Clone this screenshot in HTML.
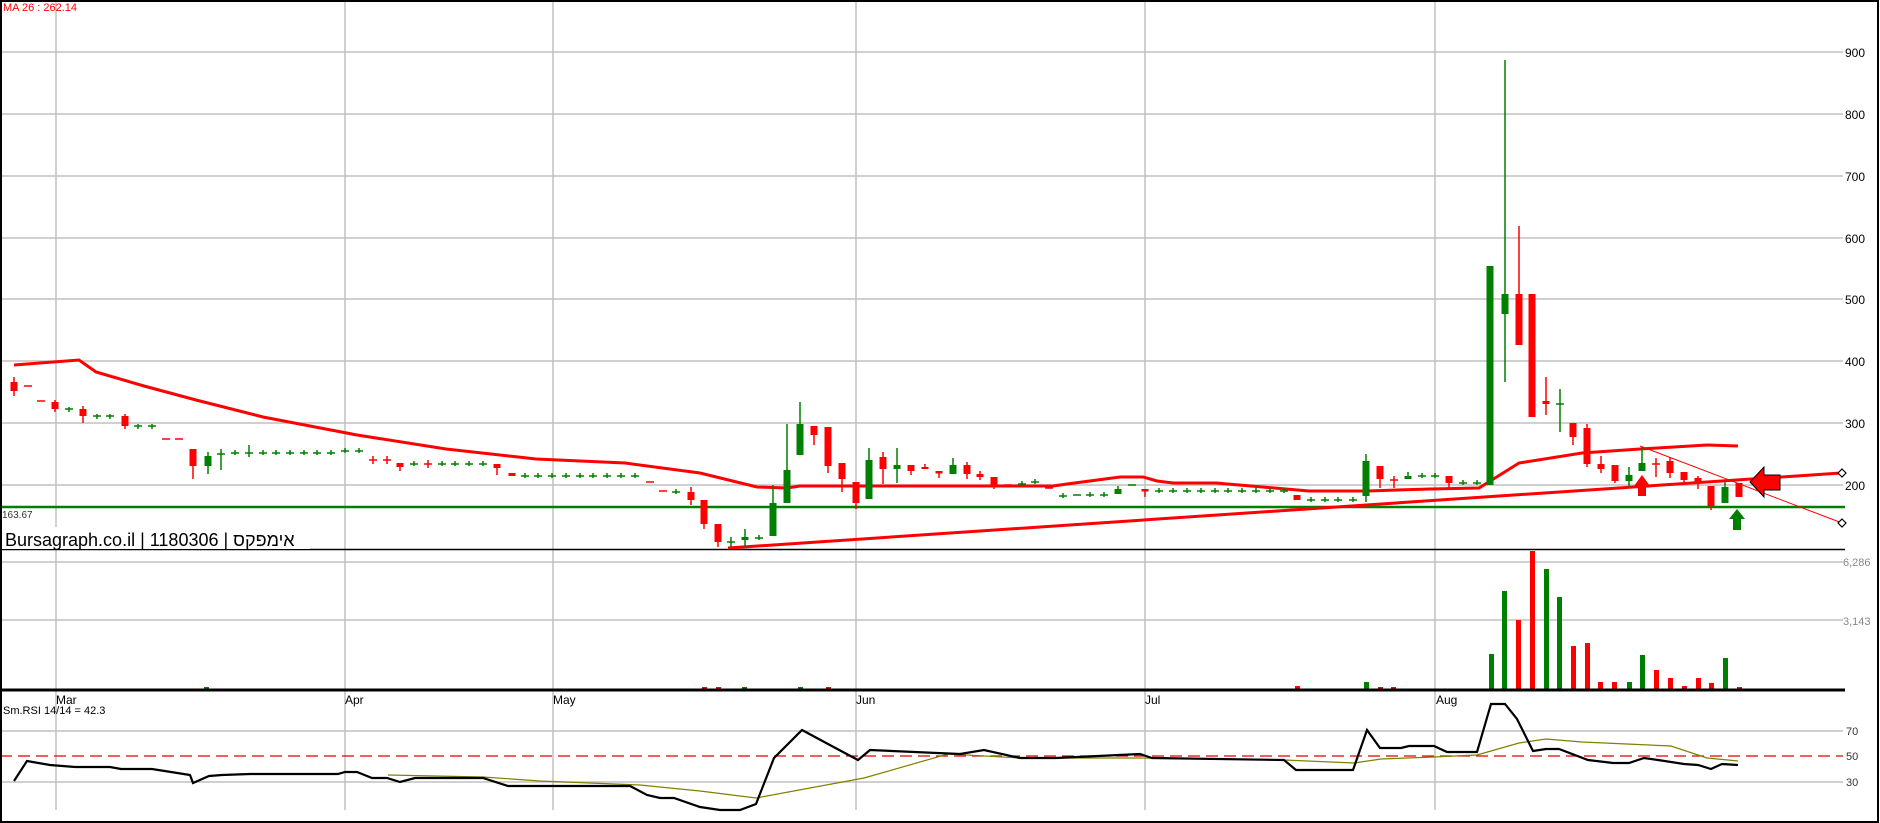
<!DOCTYPE html>
<html><head><meta charset="utf-8"><style>
html,body{margin:0;padding:0;background:#fff;}
svg{display:block;}
text{font-family:"Liberation Sans","Noto Sans CJK JP",sans-serif;}
</style></head><body>
<svg width="1880" height="823" viewBox="0 0 1880 823" xmlns="http://www.w3.org/2000/svg">
<rect width="1880" height="823" fill="#fff"/>
<!-- vertical grid -->
<g stroke="#c0c0c0" stroke-width="1.5">
<line x1="56" y1="0" x2="56" y2="527"/><line x1="56" y1="550" x2="56" y2="810"/>
<line x1="345" y1="0" x2="345" y2="810"/>
<line x1="553" y1="0" x2="553" y2="810"/>
<line x1="856" y1="0" x2="856" y2="810"/>
<line x1="1145" y1="0" x2="1145" y2="810"/>
<line x1="1435" y1="0" x2="1435" y2="810"/>
</g>
<!-- horizontal grid -->
<g stroke="#c0c0c0" stroke-width="1.5">
<line x1="0" y1="52" x2="1843" y2="52"/>
<line x1="0" y1="114" x2="1843" y2="114"/>
<line x1="0" y1="176" x2="1843" y2="176"/>
<line x1="0" y1="238" x2="1843" y2="238"/>
<line x1="0" y1="299" x2="1843" y2="299"/>
<line x1="0" y1="361" x2="1843" y2="361"/>
<line x1="0" y1="423" x2="1843" y2="423"/>
<line x1="0" y1="485" x2="1843" y2="485"/>
<line x1="0" y1="562" x2="1843" y2="562"/>
<line x1="0" y1="620" x2="1843" y2="620"/>
<line x1="0" y1="731" x2="1843" y2="731"/>
<line x1="0" y1="782" x2="1843" y2="782"/>
</g>
<line x1="0" y1="756" x2="1843" y2="756" stroke="#e00000" stroke-width="1.2" stroke-dasharray="12,6"/>
<!-- axis labels -->
<g font-size="12" fill="#000">
<text x="1845" y="57">900</text><text x="1845" y="119">800</text><text x="1845" y="181">700</text>
<text x="1845" y="243">600</text><text x="1845" y="304">500</text><text x="1845" y="366">400</text>
<text x="1845" y="428">300</text><text x="1845" y="490">200</text>
</g>
<g font-size="11" fill="#888"><text x="1843" y="566">6,286</text><text x="1843" y="625">3,143</text></g>
<g font-size="11" fill="#333"><text x="1846" y="735">70</text><text x="1846" y="760">50</text><text x="1846" y="786">30</text></g>
<text x="3" y="11" font-size="11" fill="#ff0000">MA 26 : 262.14</text>
<text x="2" y="518" font-size="10" fill="#333">163.67</text>
<g font-size="12" fill="#000">
<text x="56" y="704">Mar</text><text x="345" y="704">Apr</text><text x="553" y="704">May</text>
<text x="856" y="704">Jun</text><text x="1145" y="704">Jul</text><text x="1436" y="704">Aug</text>
</g>
<text x="3" y="714" font-size="11" fill="#000">Sm.RSI 14/14 = 42.3</text>
<!-- green support line -->
<line x1="0" y1="507" x2="1845" y2="507" stroke="#008000" stroke-width="2.5"/>
<!-- divider -->
<line x1="0" y1="549.5" x2="1845" y2="549.5" stroke="#000" stroke-width="1.5"/>
<rect x="2" y="528" width="308" height="21" fill="#fff"/>
<text x="5" y="546" font-size="18" fill="#000">Bursagraph.co.il | 1180306 | אימפקס</text>
<!-- MA line -->
<polyline fill="none" stroke="#ff0000" stroke-width="3" points="14,365 79,360 96,372 144,386 196,400 263,417 357,435 446,449 536,459 625,463 700,473 757,487 787,488 800,486 890,486 1053,486 1067,484 1120,477 1143,477 1157,481 1173,483 1216,483 1309,491 1367,491 1430,489 1479,488 1519,463 1582,453 1640,449 1707,445 1738,446"/>
<line x1="728" y1="548" x2="1841" y2="473" stroke="#ff0000" stroke-width="3"/>
<line x1="1640" y1="446" x2="1842" y2="523" stroke="#ff0000" stroke-width="1"/>
<g fill="#fff" stroke="#000" stroke-width="1.2">
<path d="M1842,469 L1846,473 L1842,477 L1838,473 Z"/><path d="M1842,519 L1846,523 L1842,527 L1838,523 Z"/>
</g>
<!-- red candles -->
<g stroke="#ff0000" stroke-width="1.5">
<line x1="14" y1="377" x2="14" y2="396"/><line x1="55" y1="400" x2="55" y2="412"/><line x1="83" y1="406" x2="83" y2="423"/>
<line x1="125" y1="414" x2="125" y2="429"/><line x1="193" y1="449" x2="193" y2="479"/><line x1="400" y1="463" x2="400" y2="471"/>
<line x1="497" y1="464" x2="497" y2="475"/><line x1="691" y1="487" x2="691" y2="505"/><line x1="704" y1="500" x2="704" y2="529"/>
<line x1="718" y1="524" x2="718" y2="547"/><line x1="814" y1="426" x2="814" y2="445"/><line x1="828" y1="427" x2="828" y2="473"/>
<line x1="842" y1="463" x2="842" y2="492"/><line x1="856" y1="482" x2="856" y2="509"/><line x1="883" y1="452" x2="883" y2="484"/>
<line x1="911" y1="465" x2="911" y2="475"/><line x1="925" y1="464" x2="925" y2="469"/><line x1="939" y1="471" x2="939" y2="478"/>
<line x1="967" y1="462" x2="967" y2="479"/><line x1="980" y1="471" x2="980" y2="480"/><line x1="994" y1="477" x2="994" y2="489"/>
<line x1="1145" y1="489" x2="1145" y2="497"/><line x1="1380" y1="466" x2="1380" y2="488"/><line x1="1394" y1="476" x2="1394" y2="488"/>
<line x1="1449" y1="476" x2="1449" y2="488"/><line x1="1519" y1="226" x2="1519" y2="345"/><line x1="1546" y1="377" x2="1546" y2="415"/>
<line x1="1573" y1="423" x2="1573" y2="445"/><line x1="1587" y1="424" x2="1587" y2="467"/><line x1="1601" y1="456" x2="1601" y2="473"/>
<line x1="1615" y1="465" x2="1615" y2="483"/><line x1="1656" y1="458" x2="1656" y2="477"/><line x1="1670" y1="457" x2="1670" y2="478"/>
<line x1="1684" y1="472" x2="1684" y2="485"/><line x1="1698" y1="476" x2="1698" y2="489"/><line x1="1711" y1="486" x2="1711" y2="510"/>
<path d="M24,386h8M37,401h8M162,439h8M175,439h8M369,460h8M383,460h8M424,464h8M373,456v8M387,456v8M428,460v8M24,386v0M646,482h8M659,491h8M1004,485h8M1045,488h8M1390,480h8M1652,464h8M1704,0"/>
</g>
<g fill="#ff0000">
<rect x="10.5" y="382" width="7" height="9"/><rect x="51.5" y="402" width="7" height="7"/><rect x="79.5" y="409" width="7" height="7"/>
<rect x="121.5" y="416" width="7" height="10"/><rect x="189.5" y="449" width="7" height="17"/><rect x="396.5" y="463" width="7" height="4"/>
<rect x="493.5" y="464" width="7" height="4"/><rect x="508.5" y="473" width="7" height="3"/><rect x="687.5" y="492" width="7" height="8"/>
<rect x="700.5" y="500" width="7" height="24"/><rect x="714.5" y="524" width="7" height="18"/><rect x="810.5" y="426" width="7" height="9"/>
<rect x="824.5" y="427" width="7" height="39"/><rect x="838.5" y="463" width="7" height="16"/><rect x="852.5" y="482" width="7" height="21"/>
<rect x="879.5" y="457" width="7" height="12"/><rect x="907.5" y="465" width="7" height="6"/><rect x="921.5" y="467" width="7" height="2"/>
<rect x="935.5" y="471" width="7" height="2.5"/><rect x="963.5" y="465" width="7" height="9"/><rect x="976.5" y="474" width="7" height="3"/>
<rect x="990.5" y="477" width="7" height="9"/><rect x="1141.5" y="489" width="7" height="2.5"/><rect x="1293.5" y="495" width="7" height="5"/>
<rect x="1376.5" y="466" width="7" height="13"/><rect x="1445.5" y="476" width="7" height="7"/><rect x="1515.5" y="294" width="7" height="51"/>
<rect x="1528.5" y="294" width="7" height="123"/><rect x="1542.5" y="401" width="7" height="3"/><rect x="1569.5" y="423" width="7" height="14"/>
<rect x="1583.5" y="428" width="7" height="36"/><rect x="1597.5" y="464" width="7" height="5"/><rect x="1611.5" y="465" width="7" height="16"/>
<rect x="1666.5" y="461" width="7" height="12"/><rect x="1680.5" y="472" width="7" height="8"/><rect x="1694.5" y="478" width="7" height="5"/>
<rect x="1707.5" y="486" width="7" height="20"/><rect x="1735.5" y="483" width="7" height="14"/>
</g>
<!-- green candles -->
<g stroke="#008000" stroke-width="1.5">
<path d="M65,409h8M69,407v5M93,416h8M97,414v5M106,416h8M110,414v5M134,426h8M138,424v5M148,426h8M152,424v5
M217,454h8M221,449v21M231,453h8M235,450v5M245,453h8M249,445v12M259,453h8M263,450v5M272,453h8M276,450v5M286,453h8M290,450v5M300,453h8M304,450v5M313,453h8M317,450v5M327,453h8M331,450v5M341,451h8M345,448v5M355,451h8M359,448v5
M410,464h8M414,461v5M438,464h8M442,461v5M451,464h8M455,461v5M465,464h8M469,461v5M479,464h8M483,461v5
M521,476h8M525,473v5M534,476h8M538,473v5M548,476h8M552,473v5M562,476h8M566,473v5M576,476h8M580,473v5M589,476h8M593,473v5M603,476h8M607,473v5M617,476h8M621,473v5M631,476h8M635,473v5
M672,492h8M676,489v5M727,542h8M731,537v10M755,538h8M759,535v5
M1018,484h8M1022,481v5M1031,482h8M1035,479v5M1059,496h8M1063,493v5M1073,495h8M1086,495h8M1090,492v5M1100,495h8M1104,492v5M1128,485h8
M1155,491h8M1159,488v5M1169,491h8M1173,488v5M1183,491h8M1187,488v5M1197,491h8M1201,488v5M1211,491h8M1215,488v5M1224,491h8M1228,488v5M1238,491h8M1242,488v5M1252,491h8M1256,488v5M1266,491h8M1270,488v5M1280,491h8M1284,488v5
M1307,500h8M1311,497v5M1321,500h8M1325,497v5M1334,500h8M1338,497v5M1349,500h8M1353,497v5
M1418,476h8M1422,473v5M1431,476h8M1435,473v5M1459,483h8M1463,480v5M1473,483h8M1477,480v5M1556,404h8M1560,389v43
M208,452v22M745,529v18M773,485v51M787,424v79M800,402v53M869,448v51M897,448v35M953,458v16M1118,486v8M1366,454v48M1408,472v7M1505,60v322M1629,467v20M1642,447v24M1725,482v21"/>
</g>
<g fill="#008000">
<rect x="204.5" y="456" width="7" height="10"/><rect x="741.5" y="537" width="7" height="3"/><rect x="769.5" y="503" width="7" height="33"/>
<rect x="783.5" y="470" width="7" height="33"/><rect x="796.5" y="424" width="7" height="31"/><rect x="865.5" y="460" width="7" height="39"/>
<rect x="893.5" y="465" width="7" height="4"/><rect x="949.5" y="465" width="7" height="9"/><rect x="1114.5" y="489" width="7" height="5"/>
<rect x="1362.5" y="461" width="7" height="35"/><rect x="1404.5" y="476" width="7" height="3"/><rect x="1486.5" y="266" width="7" height="219"/>
<rect x="1501.5" y="294" width="7" height="20"/><rect x="1625.5" y="475" width="7" height="6"/><rect x="1638.5" y="463" width="7" height="8"/>
<rect x="1721.5" y="487" width="7" height="16"/>
</g>
<!-- arrows -->
<path d="M1642,475 L1650,486 L1646,486 L1646,496 L1638,496 L1638,486 L1634,486 Z" fill="#ff0000"/>
<path d="M1737,509 L1745,519 L1741,519 L1741,530 L1733,530 L1733,519 L1729,519 Z" fill="#008000"/>
<path d="M1750,482 L1764,467 L1764,475 L1780,475 L1780,490 L1764,490 L1764,497 Z" fill="#ff0000" stroke="#000" stroke-width="1"/>
<!-- volume -->
<g fill="#008000">
<rect x="204" y="687" width="5" height="2"/><rect x="742" y="687" width="5" height="2"/><rect x="798" y="687" width="5" height="2"/>
<rect x="1364" y="682" width="5" height="7"/><rect x="1489" y="654" width="5" height="35"/><rect x="1502" y="591" width="5" height="98"/>
<rect x="1544" y="569" width="5" height="120"/><rect x="1557" y="597" width="5" height="92"/><rect x="1627" y="682" width="5" height="7"/>
<rect x="1640" y="655" width="5" height="34"/><rect x="1723" y="658" width="5" height="31"/>
</g>
<g fill="#ff0000">
<rect x="702" y="687" width="5" height="2"/><rect x="716" y="687" width="5" height="2"/><rect x="826" y="687" width="5" height="2"/>
<rect x="1295" y="686" width="5" height="3"/><rect x="1378" y="687" width="5" height="2"/><rect x="1391" y="687" width="5" height="2"/>
<rect x="1516" y="620" width="5" height="69"/><rect x="1530" y="551" width="5" height="138"/><rect x="1571" y="646" width="5" height="43"/>
<rect x="1585" y="643" width="5" height="46"/><rect x="1598" y="682" width="5" height="7"/><rect x="1612" y="682" width="5" height="7"/>
<rect x="1654" y="670" width="5" height="19"/><rect x="1668" y="678" width="5" height="11"/><rect x="1682" y="686" width="5" height="3"/>
<rect x="1696" y="678" width="5" height="11"/><rect x="1709" y="683" width="5" height="6"/><rect x="1737" y="687" width="5" height="2"/>
</g>
<line x1="0" y1="690" x2="1845" y2="690" stroke="#000" stroke-width="3"/>
<!-- RSI -->
<polyline fill="none" stroke="#808000" stroke-width="1.2" points="388,775 483,777 540,781 640,785 700,791 756,798 864,778 948,754 1020,758 1140,758 1284,760 1354,763 1381,759 1434,757 1477,755 1519,743 1546,739 1582,742 1671,746 1707,758 1738,761"/>
<polyline fill="none" stroke="#000" stroke-width="2.2" points="14,781 27,761 50,765 75,767 110,767 121,769 152,769 171,772 190,775 193,783 209,776 222,775 250,774 338,774 345,772 357,772 372,778 387,778 400,782 415,778 483,778 508,786 630,786 647,795 660,798 674,798 700,807 720,810 740,810 756,804 774,758 802,730 828,744 858,760 870,750 960,754 984,750 1020,758 1056,758 1140,754 1152,758 1284,760 1296,770 1353,770 1367,730 1380,748 1401,748 1409,746 1434,746 1447,752 1477,752 1491,704 1505,704 1517,719 1533,751 1546,749 1559,749 1588,760 1613,763 1629,763 1644,758 1658,760 1684,764 1698,765 1711,769 1722,764 1738,765"/>
<!-- frame -->
<rect x="1" y="1" width="1877" height="821" fill="none" stroke="#000" stroke-width="2"/>
</svg>
</body></html>
